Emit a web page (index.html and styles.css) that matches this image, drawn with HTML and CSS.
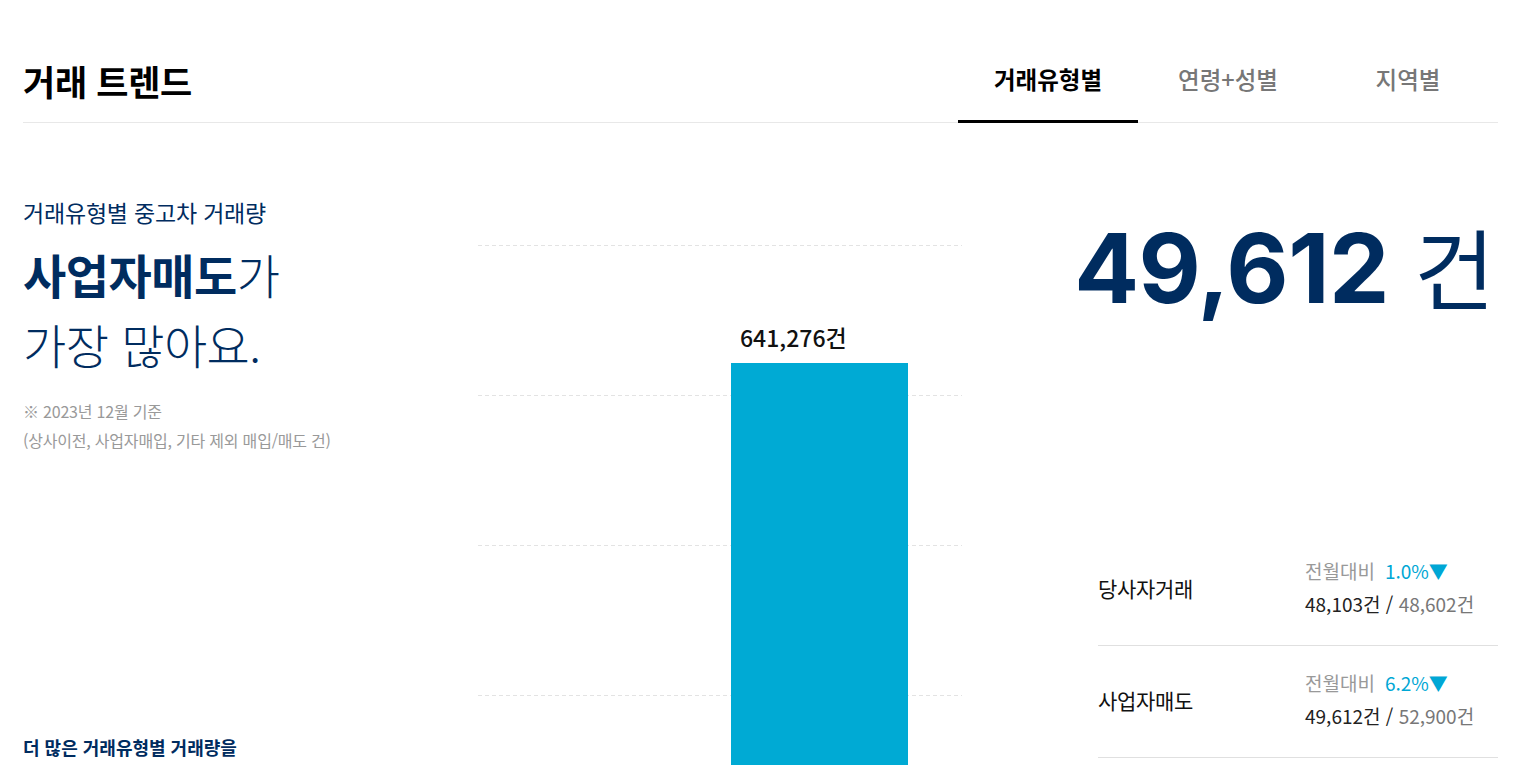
FILE: index.html
```html
<!DOCTYPE html>
<html lang="ko">
<head>
<meta charset="utf-8">
<title>거래 트렌드</title>
<link rel="stylesheet" href="styles.css">
</head>
<body>
<div class="wrap">
  <header class="head">
    <h2 class="title">거래 트렌드</h2>
    <nav class="tabs">
      <a class="tab active">거래유형별</a>
      <a class="tab">연령+성별</a>
      <a class="tab">지역별</a>
    </nav>
  </header>

  <section class="main">
    <div class="left">
      <p class="sub">거래유형별 중고차 거래량</p>
      <p class="headline"><strong>사업자매도</strong>가<br>가장 많아요.</p>
      <p class="note">※ 2023년 12월 기준<br>(상사이전, 사업자매입, 기타 제외 매입/매도 건)</p>
      <p class="more">더 많은 거래유형별 거래량을</p>
    </div>

    <div class="chart">
      <div class="gridline"></div>
      <div class="gridline"></div>
      <div class="gridline"></div>
      <div class="gridline"></div>
      <div class="barcol">
        <span class="barlabel">641,276건</span>
        <div class="bar"></div>
      </div>
    </div>

    <div class="right">
      <div class="big"><span class="num">49,612</span><span class="unit">건</span></div>
      <ul class="rows">
        <li class="row">
          <span class="rname">당사자거래</span>
          <div class="rinfo">
            <div class="cmp">전월대비<span class="pct">1.0%▼</span></div>
            <div class="cnt">48,103건 <span class="slash">/</span> <span class="prev">48,602건</span></div>
          </div>
        </li>
        <li class="row">
          <span class="rname">사업자매도</span>
          <div class="rinfo">
            <div class="cmp">전월대비<span class="pct">6.2%▼</span></div>
            <div class="cnt">49,612건 <span class="slash">/</span> <span class="prev">52,900건</span></div>
          </div>
        </li>
      </ul>
    </div>
  </section>
</div>
</body>
</html>
```

FILE: styles.css
```css
* { box-sizing: border-box; }
html, body { margin: 0; padding: 0; background: #fff; }
body {
  font-family: "Noto Sans CJK KR", "Noto Sans", sans-serif;
  color: #000;
  overflow: hidden;
  height: 765px;
}
.wrap { padding: 0 23px; }

.head {
  display: flex;
  justify-content: space-between;
  align-items: flex-end;
  height: 123px;
  border-bottom: 1px solid #e8e8e8;
}
.title {
  margin: 0 0 21px;
  font-size: 35px;
  font-weight: 700;
  line-height: 40px;
  letter-spacing: -0.3px;
}
.tabs { display: flex; }
.tab {
  width: 180px;
  text-align: center;
  font-size: 23.5px;
  line-height: 30px;
  padding-bottom: 26px;
  color: #777;
  font-weight: 500;
  border-bottom: 3px solid transparent;
  margin-bottom: -1px;
}
.tab.active { color: #000; font-weight: 700; border-bottom-color: #000; }

.main {
  display: grid;
  grid-template-columns: 455px 484px 1fr;
  height: 642px;
}

.left { display: flex; flex-direction: column; padding-top: 74px; color: #002c5f; }
.sub { margin: 0; font-size: 23px; line-height: 30px; letter-spacing: -0.2px; }
.headline {
  margin: 12px 0 0;
  font-size: 47px;
  line-height: 70px;
  font-weight: 300;
  letter-spacing: -0.5px;
}
.headline strong { font-weight: 700; }
.note {
  margin: 18px 0 0;
  font-size: 16px;
  line-height: 29px;
  color: #999;
  letter-spacing: -0.2px;
}
.more {
  margin: auto 0 0;
  font-size: 18px;
  font-weight: 700;
  line-height: 26px;
  margin-bottom: 5px;
}

.chart {
  position: relative;
  margin-top: 122px;
  display: flex;
  flex-direction: column;
  gap: 149px;
}
.gridline {
  height: 1px;
  background: repeating-linear-gradient(to right, #e3e3e3 0 4px, transparent 4px 7px);
}
.barcol {
  position: absolute;
  left: 253px;
  top: 76px;
  width: 177px;
  display: flex;
  flex-direction: column;
}
.barlabel {
  padding-left: 9px;
  font-size: 23px;
  line-height: 32px;
  font-weight: 500;
  color: #111;
  margin-bottom: 10px;
}
.bar { height: 420px; background: #00aad4; }

.right { display: flex; flex-direction: column; align-items: flex-end; padding-top: 97px; }
.big { color: #002c5f; line-height: 1; padding-right: 3px; display: flex; align-items: baseline; }
.num { font-family: Inter, "Noto Sans", sans-serif; font-weight: 700; font-size: 96px; letter-spacing: -0.5px; }
.unit { font-size: 88px; font-weight: 400; margin-left: 25px; }

.rows { list-style: none; margin: 218px 0 0; padding: 0; width: 400px; }
.row {
  display: flex;
  align-items: center;
  height: 112px;
  border-bottom: 1px solid #e0e0e0;
}
.rname { width: 207px; font-size: 21px; font-weight: 400; color: #111; letter-spacing: -0.3px; margin-top: -4px; }
.rinfo { display: flex; flex-direction: column; gap: 4px; margin-top: -6px; }
.cmp { font-size: 19px; line-height: 29px; color: #999; }
.pct { color: #00a7d5; margin-left: 10px; }
.cnt { font-size: 19px; line-height: 29px; color: #222; }
.prev { color: #777; }
```
